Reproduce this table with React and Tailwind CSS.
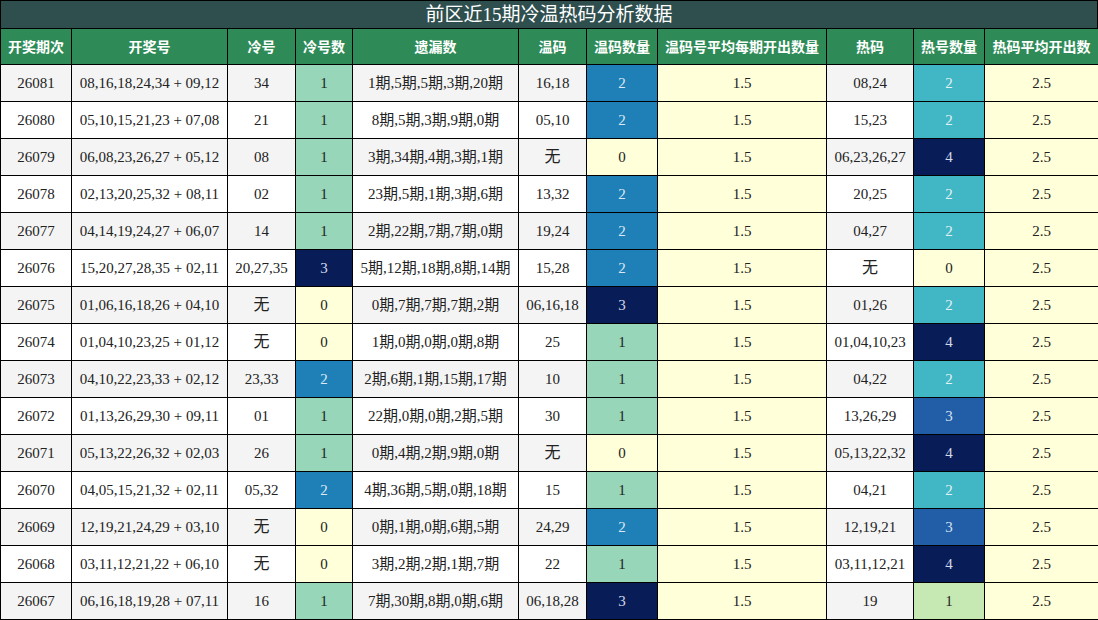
const rows = [
  ["26081", "08,16,18,24,34 + 09,12", "34", 1, "1期,5期,5期,3期,20期", "16,18", 2, "08,24", 2],
  ["26080", "05,10,15,21,23 + 07,08", "21", 1, "8期,5期,3期,9期,0期", "05,10", 2, "15,23", 2],
  ["26079", "06,08,23,26,27 + 05,12", "08", 1, "3期,34期,4期,3期,1期", "无", 0, "06,23,26,27", 4],
  ["26078", "02,13,20,25,32 + 08,11", "02", 1, "23期,5期,1期,3期,6期", "13,32", 2, "20,25", 2],
  ["26077", "04,14,19,24,27 + 06,07", "14", 1, "2期,22期,7期,7期,0期", "19,24", 2, "04,27", 2],
  ["26076", "15,20,27,28,35 + 02,11", "20,27,35", 3, "5期,12期,18期,8期,14期", "15,28", 2, "无", 0],
  ["26075", "01,06,16,18,26 + 04,10", "无", 0, "0期,7期,7期,7期,2期", "06,16,18", 3, "01,26", 2],
  ["26074", "01,04,10,23,25 + 01,12", "无", 0, "1期,0期,0期,0期,8期", "25", 1, "01,04,10,23", 4],
  ["26073", "04,10,22,23,33 + 02,12", "23,33", 2, "2期,6期,1期,15期,17期", "10", 1, "04,22", 2],
  ["26072", "01,13,26,29,30 + 09,11", "01", 1, "22期,0期,0期,2期,5期", "30", 1, "13,26,29", 3],
  ["26071", "05,13,22,26,32 + 02,03", "26", 1, "0期,4期,2期,9期,0期", "无", 0, "05,13,22,32", 4],
  ["26070", "04,05,15,21,32 + 02,11", "05,32", 2, "4期,36期,5期,0期,18期", "15", 1, "04,21", 2],
  ["26069", "12,19,21,24,29 + 03,10", "无", 0, "0期,1期,0期,6期,5期", "24,29", 2, "12,19,21", 3],
  ["26068", "03,11,12,21,22 + 06,10", "无", 0, "3期,2期,2期,1期,7期", "22", 1, "03,11,12,21", 4],
  ["26067", "06,16,18,19,28 + 07,11", "16", 1, "7期,30期,8期,0期,6期", "06,18,28", 3, "19", 1],
];

const heads = [
  ["开奖期次", "w-[71px]"],
  ["开奖号", "w-[156px]"],
  ["冷号", "w-[68px]"],
  ["冷号数", "w-[57px]"],
  ["遗漏数", "w-[166px]"],
  ["温码", "w-[68px]"],
  ["温码数量", "w-[71px]"],
  ["温码号平均每期开出数量", "w-[169px]"],
  ["热码", "w-[87px]"],
  ["热号数量", "w-[71px]"],
  ["热码平均开出数", "w-[114px]"],
];

// cold / warm count colours (0..3)
const cwColor = [
  "bg-[#ffffd9] text-[#222]",
  "bg-[#97d6b9] text-[#222]",
  "bg-[#1f80b8] text-[#dde8f2]",
  "bg-[#081d58] text-[#d3d9e8]",
];

// hot count colours (0..4)
const hotColor = [
  "bg-[#ffffd9] text-[#222]",
  "bg-[#c6e9b4] text-[#222]",
  "bg-[#41b6c4] text-[#e3f3f5]",
  "bg-[#225ea8] text-[#d8e2f0]",
  "bg-[#081d58] text-[#d3d9e8]",
];

const td = "border border-black text-center align-middle p-0 h-[37px]";

function Txt({ v }) {
  if (v === "无") return <span className="text-[16px]">无</span>;
  return v;
}

export default function App() {
  return (
    <div
      className="w-[1098px] h-[620px] overflow-hidden bg-white"
      style={{ fontFamily: '"Liberation Serif", "Noto Sans CJK SC", serif' }}
    >
      <div className="h-[28px] bg-[#2f4f4f] border-x border-t border-black flex items-center justify-center text-white text-[19px] leading-none">
        前区近15期冷温热码分析数据
      </div>
      <table className="w-[1098px] table-fixed border-collapse border border-black text-[15px] text-[#222]">
        <thead>
          <tr>
            {heads.map(([h, w]) => (
              <th
                key={h}
                className={`${w} h-[36px] border border-black bg-[#2e8b57] text-white text-[14px] font-bold p-0`}
                style={{ fontFamily: '"Noto Sans CJK SC", sans-serif' }}
              >
                {h}
              </th>
            ))}
          </tr>
        </thead>
        <tbody>
          {rows.map((r, i) => {
            const bg = i % 2 === 0 ? "bg-[#f4f4f4]" : "bg-white";
            return (
              <tr key={r[0]} className={bg}>
                <td className={td}>{r[0]}</td>
                <td className={td}>{r[1]}</td>
                <td className={td}><Txt v={r[2]} /></td>
                <td className={`${td} ${cwColor[r[3]]}`}>{r[3]}</td>
                <td className={td}>{r[4]}</td>
                <td className={td}><Txt v={r[5]} /></td>
                <td className={`${td} ${cwColor[r[6]]}`}>{r[6]}</td>
                <td className={`${td} bg-[#ffffd9]`}>1.5</td>
                <td className={td}><Txt v={r[7]} /></td>
                <td className={`${td} ${hotColor[r[8]]}`}>{r[8]}</td>
                <td className={`${td} bg-[#ffffd9]`}>2.5</td>
              </tr>
            );
          })}
        </tbody>
      </table>
    </div>
  );
}
